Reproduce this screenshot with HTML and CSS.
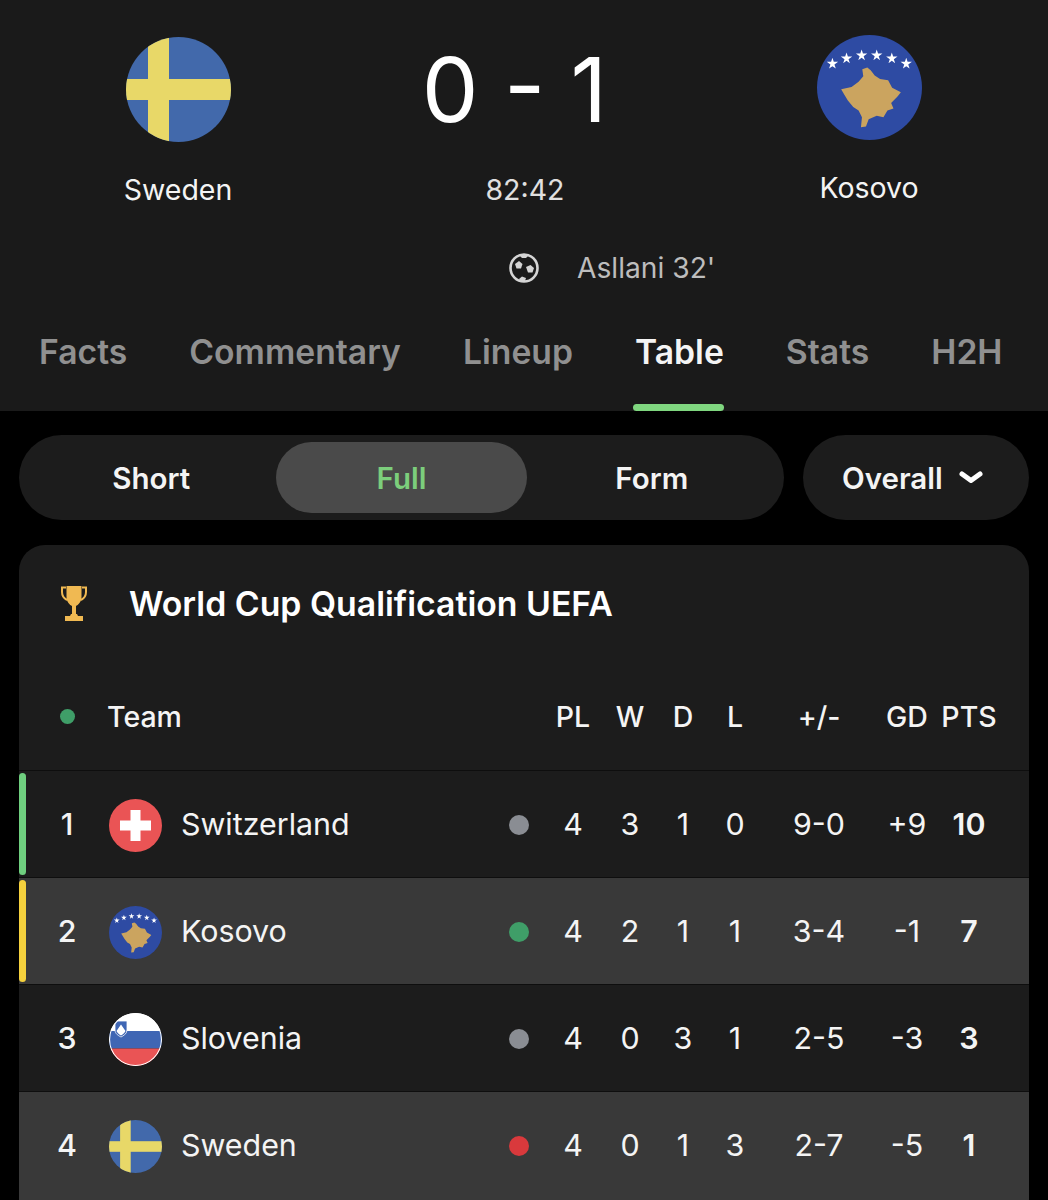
FILE: index.html
```html
<!DOCTYPE html>
<html lang="en">
<head>
  <meta charset="UTF-8">
  <meta name="viewport" content="width=device-width, initial-scale=1.0">
  <title>Sweden - Kosovo</title>
  <link rel="stylesheet" href="styles.css">
</head>
<body>
  <!-- flag drawings, used in the header and in the table -->
  <svg class="defs" width="0" height="0">
    <symbol id="flag-sweden" viewBox="0 0 105 105">
      <rect width="105" height="105" fill="#4269ab"/>
      <rect x="22" width="21" height="105" fill="#e8d868"/>
      <rect y="42" width="105" height="21" fill="#e8d868"/>
    </symbol>
    <symbol id="flag-kosovo" viewBox="112 45 313 313">
      <rect x="112" y="45" width="313" height="313" fill="#2e4ba3"/>
      <path fill="#cba45f" d="M262 142 L247 147 L250 168 L236 184 L215 200 L184 207 L194 224 L204 240 L220 260 L236 270 L246 290 L243 320 L258 318 L266 296 L290 286 L310 290 L322 270 L340 264 L333 248 L352 228 L362 216 L336 202 L324 180 L300 176 L284 166 L272 150 Z"/>
      <g fill="#fff">
        <polygon transform="translate(158 130)" points="0,-17 4,-5 17,-5 6,3 10,15 0,8 -10,15 -6,3 -17,-5 -4,-5"/>
        <polygon transform="translate(200 114)" points="0,-17 4,-5 17,-5 6,3 10,15 0,8 -10,15 -6,3 -17,-5 -4,-5"/>
        <polygon transform="translate(245 105)" points="0,-17 4,-5 17,-5 6,3 10,15 0,8 -10,15 -6,3 -17,-5 -4,-5"/>
        <polygon transform="translate(290 105)" points="0,-17 4,-5 17,-5 6,3 10,15 0,8 -10,15 -6,3 -17,-5 -4,-5"/>
        <polygon transform="translate(335 114)" points="0,-17 4,-5 17,-5 6,3 10,15 0,8 -10,15 -6,3 -17,-5 -4,-5"/>
        <polygon transform="translate(378 130)" points="0,-17 4,-5 17,-5 6,3 10,15 0,8 -10,15 -6,3 -17,-5 -4,-5"/>
      </g>
    </symbol>
    <symbol id="flag-switzerland" viewBox="0 0 53 53">
      <rect width="53" height="53" fill="#ea5455"/>
      <rect x="11" y="21.5" width="31" height="10" fill="#fff"/>
      <rect x="21.5" y="11" width="10" height="31" fill="#fff"/>
    </symbol>
    <symbol id="flag-slovenia" viewBox="0 0 53 53">
      <rect width="53" height="18" fill="#fff"/>
      <rect y="18" width="53" height="17.500" fill="#3f66b4"/>
      <rect y="35.500" width="53" height="18" fill="#ea5455"/>
      <path d="M6 8 H18 V17 C18 21 14 23 12 24 C10 23 6 21 6 17 Z" fill="#3f66b4" stroke="#fff" stroke-width="0.8"/>
      <path d="M7.500 18 L12 11.500 L16.500 18 C15.500 20.500 13.500 21.500 12 22.500 C10.500 21.500 8.500 20.500 7.500 18 Z" fill="#fff"/>
      <circle cx="26.500" cy="26.500" r="26" fill="none" stroke="#fff" stroke-width="1.200"/>
    </symbol>
  </svg>

  <header class="match">
    <div class="teams">
      <div class="side">
        <svg class="flag-big"><use href="#flag-sweden"/></svg>
        <div class="team-name">Sweden</div>
      </div>
      <div class="side">
        <div class="score">0 - 1</div>
        <div class="clock">82:42</div>
      </div>
      <div class="side side-away">
        <svg class="flag-big"><use href="#flag-kosovo"/></svg>
        <div class="team-name">Kosovo</div>
      </div>
    </div>

    <div class="goal">
      <svg class="ball" viewBox="0 0 30 30">
        <circle cx="15" cy="15" r="13.500" fill="none" stroke="#d4d4d4" stroke-width="2.600"/>
        <path d="M6 11 L10 8 L13.500 11 L12 15.500 L7.500 15.500 Z" fill="#d4d4d4"/>
        <path d="M17 14 L21.500 12 L25 15 L23.500 19.500 L19 19.500 Z" fill="#d4d4d4"/>
        <path d="M10 2 H20 L17 5 H13 Z" fill="#d4d4d4"/>
        <path d="M10 26 L13 23.500 L17 25 L16 28 H11 Z" fill="#d4d4d4"/>
      </svg>
      <span class="scorer">Asllani 32'</span>
    </div>

    <nav class="tabs">
      <a class="tab">Facts</a>
      <a class="tab">Commentary</a>
      <a class="tab">Lineup</a>
      <a class="tab tab-active">Table</a>
      <a class="tab">Stats</a>
      <a class="tab">H2H</a>
    </nav>
  </header>

  <main class="content">
    <div class="controls">
      <div class="segment">
        <div class="seg-item">Short</div>
        <div class="seg-item seg-active">Full</div>
        <div class="seg-item">Form</div>
      </div>
      <div class="select">
        Overall
        <svg class="chevron" viewBox="0 0 24 13">
          <path d="M3 3 L12 9.500 L21 3" fill="none" stroke="#fff" stroke-width="5" stroke-linecap="round" stroke-linejoin="round"/>
        </svg>
      </div>
    </div>

    <section class="card">
      <div class="card-title">
        <svg class="trophy" viewBox="0 0 26 36">
          <path d="M5.500 1 H20.500 V12 C20.500 17 17 20 15 21 V29 H11 V21 C9 20 5.500 17 5.500 12 Z" fill="#f0b952"/>
          <path d="M5 2.500 H1 V7 C1 11 3 13.500 6 15 M21 2.500 H25 V7 C25 11 23 13.500 20 15" fill="none" stroke="#f0b952" stroke-width="2"/>
          <path d="M10 29 H16 L17 31 H22 V36 H4 V31 H9 Z" fill="#f0b952"/>
        </svg>
        <h2>World Cup Qualification UEFA</h2>
      </div>

      <div class="row row-head">
        <span class="rank"><i class="head-dot"></i></span>
        <span class="head-team">Team</span>
        <span></span>
        <span>PL</span><span>W</span><span>D</span><span>L</span><span>+/-</span><span>GD</span><span>PTS</span>
      </div>

      <div class="row">
        <i class="bar bar-green"></i>
        <span class="rank">1</span>
        <svg class="flag"><use href="#flag-switzerland"/></svg>
        <span class="name">Switzerland</span>
        <i class="dot dot-grey"></i>
        <span>4</span><span>3</span><span>1</span><span>0</span><span>9-0</span><span>+9</span><span class="pts">10</span>
      </div>
      <div class="row row-hl">
        <i class="bar bar-yellow"></i>
        <span class="rank">2</span>
        <svg class="flag"><use href="#flag-kosovo"/></svg>
        <span class="name">Kosovo</span>
        <i class="dot dot-green"></i>
        <span>4</span><span>2</span><span>1</span><span>1</span><span>3-4</span><span>-1</span><span class="pts">7</span>
      </div>
      <div class="row">
        <span class="rank">3</span>
        <svg class="flag"><use href="#flag-slovenia"/></svg>
        <span class="name">Slovenia</span>
        <i class="dot dot-grey"></i>
        <span>4</span><span>0</span><span>3</span><span>1</span><span>2-5</span><span>-3</span><span class="pts">3</span>
      </div>
      <div class="row row-hl row-last">
        <span class="rank">4</span>
        <svg class="flag"><use href="#flag-sweden"/></svg>
        <span class="name">Sweden</span>
        <i class="dot dot-red"></i>
        <span>4</span><span>0</span><span>1</span><span>3</span><span>2-7</span><span>-5</span><span class="pts">1</span>
      </div>
    </section>
  </main>
</body>
</html>
```

FILE: styles.css
```css
* {
  box-sizing: border-box;
}

html, body {
  height: 1200px;
  overflow: hidden;
}

body {
  margin: 0;
  background: #000;
  color: #f4f4f4;
  font-family: Inter, "Liberation Sans", sans-serif;
}

.defs {
  display: block;
}

/* match header */
.match {
  height: 411px;
  padding-top: 37px;
  background: #1a1a1a;
}

.teams {
  display: grid;
  grid-template-columns: 356px 338px 350px;
}

.side {
  display: flex;
  flex-direction: column;
  align-items: center;
  gap: 31px;
}

.side-away {
  margin-top: -2px;
}

.flag-big {
  display: block;
  width: 105px;
  height: 105px;
  border-radius: 50%;
}

.team-name, .clock {
  font-size: 28.5px;
  line-height: 34px;
}

.score {
  height: 105px;
  padding-right: 21px;
  font-size: 90px;
  font-weight: 400;
  line-height: 105px;
  color: #fff;
}

.clock {
  color: #e0e0e0;
}

.goal {
  display: flex;
  align-items: center;
  gap: 38px;
  height: 30px;
  margin-top: 46px;
  padding-left: 509px;
}

.ball {
  width: 30px;
  height: 30px;
}

.scorer {
  font-size: 28.2px;
  color: #bdbdbd;
}

.tabs {
  display: flex;
  gap: 62px;
  margin-top: 49px;
  padding-left: 39px;
}

.tab {
  position: relative;
  padding-bottom: 39px;
  font-size: 33.7px;
  font-weight: 600;
  line-height: 40px;
  color: #909090;
}

.tab-active {
  color: #f4f4f4;
}

.tab-active::after {
  content: "";
  position: absolute;
  left: -2px;
  right: 0;
  bottom: 0;
  height: 7px;
  border-radius: 4px;
  background: #7fd67f;
}

/* controls */
.content {
  padding: 24px 19px 0;
}

.controls {
  display: flex;
  gap: 19px;
}

.segment {
  display: grid;
  grid-template-columns: repeat(3, 1fr);
  align-items: stretch;
  width: 765px;
  height: 85px;
  padding: 7px;
  border-radius: 43px;
  background: #1c1c1c;
}

.seg-item {
  display: flex;
  align-items: center;
  justify-content: center;
  border-radius: 36px;
  font-size: 29.5px;
  font-weight: 600;
}

.seg-active {
  background: #4a4a4a;
  color: #7cce7c;
}

.select {
  display: flex;
  align-items: center;
  gap: 16px;
  width: 226px;
  height: 85px;
  padding-left: 39px;
  border-radius: 43px;
  background: #1c1c1c;
  font-size: 29.5px;
  font-weight: 600;
}

.chevron {
  width: 24px;
  height: 13px;
}

/* table card */
.card {
  margin-top: 25px;
  border-radius: 26px 26px 0 0;
  background: #1c1c1c;
  overflow: hidden;
}

.card-title {
  display: flex;
  align-items: center;
  gap: 42px;
  height: 118px;
  padding: 0 0 2px 42px;
}

.card-title h2 {
  margin: 0;
  font-size: 33.8px;
  font-weight: 600;
  color: #fff;
}

.trophy {
  width: 26px;
  height: 36px;
}

.row {
  position: relative;
  display: grid;
  grid-template-columns: 40px 53px 1fr 42px 66px 48px 58px 46px 122px 54px 70px;
  align-items: center;
  justify-items: center;
  height: 107px;
  padding: 0 25px 0 28px;
  border-top: 1px solid #0e0e0e;
  font-size: 30.4px;
}

.row-head {
  height: 107px;
  border-top: 0;
  font-size: 28.5px;
  font-weight: 500;
}

.row-hl {
  background: #393939;
}

.row-last {
  height: 120px;
  padding-bottom: 13px;
}

.head-team {
  grid-column: 2 / 4;
  justify-self: start;
  margin-left: 20px;
}

.head-dot {
  display: block;
  width: 15px;
  height: 15px;
  border-radius: 50%;
  background: #3f9e68;
}

.rank {
  font-weight: 500;
}

.flag {
  display: block;
  justify-self: start;
  width: 53px;
  height: 53px;
  margin: 2px 0 0 22px;
  border-radius: 50%;
}

.name {
  justify-self: start;
  margin-left: 41px;
}

.pts {
  font-weight: 600;
}

.dot {
  display: block;
  width: 20px;
  height: 20px;
  margin-top: 2px;
  border-radius: 50%;
}

.dot-grey {
  background: #8a8d93;
}

.dot-green {
  background: #3f9e68;
}

.dot-red {
  background: #d9393c;
}

.bar {
  position: absolute;
  top: 2px;
  left: 0;
  bottom: 2px;
  width: 7px;
  border-radius: 4px;
}

.bar-green {
  background: #6fcf7f;
}

.bar-yellow {
  background: #f5d13d;
}
```
